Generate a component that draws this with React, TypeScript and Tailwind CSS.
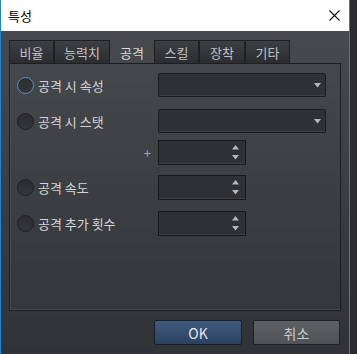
import React from "react";

const font = { fontFamily: '"Noto Sans CJK KR", "Noto Sans", sans-serif' };

function Radio({ focused }: { focused?: boolean }) {
  return (
    <div
      className={
        "w-[17px] h-[17px] rounded-full shrink-0 bg-gradient-to-b from-[#2a2c2f] to-[#34373a] border " +
        (focused ? "border-[#5b8fc7]" : "border-[#1f2123]")
      }
    />
  );
}

function Dropdown() {
  return (
    <div className="w-[168px] h-[24px] rounded-[2px] border border-[#1b1c1e] bg-[#2f3235] shadow-[inset_0_-1px_0_#3e4144] flex items-center justify-end pr-[4px]">
      <svg width="7" height="5" viewBox="0 0 7 5">
        <path d="M0 0 L7 0 L3.5 4.5 Z" fill="#b4b6b8" />
      </svg>
    </div>
  );
}

function Spin() {
  return (
    <div className="w-[88px] h-[25px] border border-[#18191b] bg-[#2e3134] shadow-[inset_0_-1px_0_#3e4144] flex flex-col items-end justify-center gap-[5px] pr-[6px]">
      <svg width="7" height="5" viewBox="0 0 7 5">
        <path d="M0 4.5 L7 4.5 L3.5 0 Z" fill="#b4b6b8" />
      </svg>
      <svg width="7" height="5" viewBox="0 0 7 5">
        <path d="M0 0 L7 0 L3.5 4.5 Z" fill="#b4b6b8" />
      </svg>
    </div>
  );
}

function Label({ children, focused }: { children: React.ReactNode; focused?: boolean }) {
  return (
    <div className="w-[148px] shrink-0 flex items-center pl-[7px] gap-[4px]">
      <Radio focused={focused} />
      <span className="text-[13px] leading-none text-[#d2d4d6]">{children}</span>
    </div>
  );
}

const tabs: { t: string; w: string; active?: boolean }[] = [
  { t: "비율", w: "w-[45px]" },
  { t: "능력치", w: "w-[56px]" },
  { t: "공격", w: "w-[44px]", active: true },
  { t: "스킬", w: "w-[45px]" },
  { t: "장착", w: "w-[46px]" },
  { t: "기타", w: "w-[45px]" },
];

export default function App() {
  return (
    <div className="w-[357px] h-[354px] bg-[#2a2c2f] overflow-hidden" style={font}>
      <div className="w-[350px] h-[354px] border-x border-[#1a86d9] flex flex-col">
        <div className="h-[31px] bg-white flex items-center justify-between pl-[7px] pr-[9px] shrink-0">
          <span className="text-[13px] leading-none text-black">특성</span>
          <svg width="11" height="11" viewBox="0 0 11 11">
            <path d="M0.5 0.5 L10.5 10.5 M10.5 0.5 L0.5 10.5" stroke="#111" strokeWidth="1.1" />
          </svg>
        </div>
        <div className="flex-1 bg-gradient-to-b from-[#47494c] to-[#303336] pl-[8px] pt-[9px] flex flex-col">
          <div className="flex h-[23px]">
            {tabs.map((tab) => (
              <div
                key={tab.t}
                className={
                  tab.w +
                  " h-[23px] flex items-center justify-center text-[13px] leading-none border border-b-0 " +
                  (tab.active
                    ? "bg-[#46494c] border-[#46494c] text-[#d8d8d8]"
                    : "bg-gradient-to-b from-[#3d4043] to-[#2b2d30] border-[#1e2022] text-[#bfc1c3]")
                }
              >
                {tab.t}
              </div>
            ))}
          </div>
          <div className="w-[332px] h-[248px] border border-[#1c1e20] bg-gradient-to-b from-[#45484b] to-[#33363a] shadow-[inset_0_-1px_0_#4a4d50,inset_1px_0_0_#4a4d50] flex flex-col pt-[9px]">
            <div className="flex h-[24px] items-center">
              <Label focused>공격 시 속성</Label>
              <Dropdown />
            </div>
            <div className="flex h-[24px] items-center mt-[12px]">
              <Label>공격 시 스탯</Label>
              <Dropdown />
            </div>
            <div className="flex h-[25px] items-center mt-[7px]">
              <div className="w-[148px] shrink-0 flex justify-end pr-[7px] text-[13px] leading-none text-[#9aa6b4]">+</div>
              <Spin />
            </div>
            <div className="flex h-[25px] items-center mt-[10px]">
              <Label>공격 속도</Label>
              <Spin />
            </div>
            <div className="flex h-[25px] items-center mt-[11px]">
              <Label>공격 추가 횟수</Label>
              <Spin />
            </div>
          </div>
          <div className="flex justify-end gap-[11px] pr-[9px] mt-[9px]">
            <div className="w-[88px] h-[25px] rounded-[2px] border border-[#1a1c1f] bg-gradient-to-b from-[#3f5a7e] to-[#2d4262] flex items-center justify-center text-[14px] leading-none text-[#e4e6e8]">
              OK
            </div>
            <div className="w-[87px] h-[25px] rounded-[2px] border border-[#1f2123] bg-gradient-to-b from-[#5e6164] to-[#505356] flex items-center justify-center text-[14px] leading-none text-[#c9cbcd]">
              취소
            </div>
          </div>
        </div>
      </div>
    </div>
  );
}
